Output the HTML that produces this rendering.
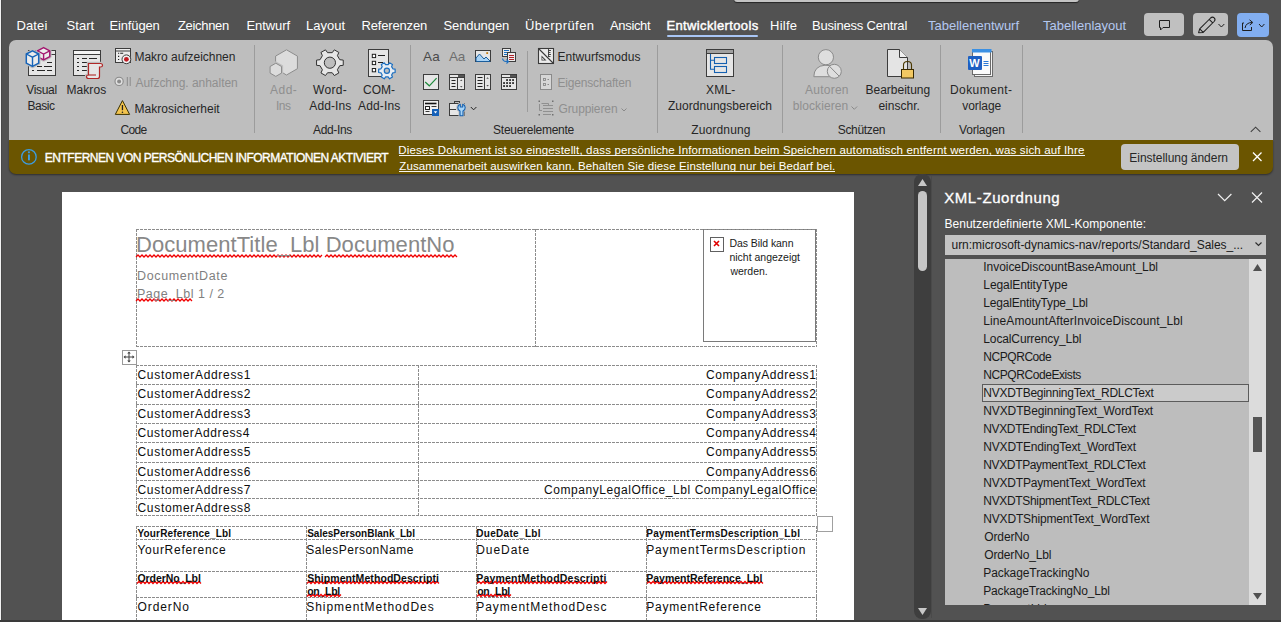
<!DOCTYPE html>
<html><head><meta charset="utf-8"><title>Word</title><style>
html,body{margin:0;padding:0;width:1281px;height:622px;overflow:hidden;background:#525252;}
body{position:relative;font-family:"Liberation Sans",sans-serif;}
.t{position:absolute;white-space:nowrap;line-height:40px;font-family:"Liberation Sans",sans-serif;}
svg{position:absolute;left:0;top:0;}
</style></head><body>
<div style="position:absolute;left:0px;top:0px;width:1px;height:622px;background:#f2f2f2"></div>
<div style="position:absolute;left:1px;top:0px;width:1px;height:622px;background:#484848"></div>
<div style="position:absolute;left:734px;top:-10px;width:345px;height:12px;background:#c3c3c3;border-radius:3px;box-shadow:0 1px 1px rgba(0,0,0,.55)"></div>
<div style="position:absolute;left:9px;top:140px;width:1264px;height:34px;background:#6b5500;border-radius:0 0 7px 7px;box-shadow:0 1px 2px rgba(0,0,0,.45)"></div>
<div style="position:absolute;left:9px;top:40px;width:1264px;height:100px;background:#bebebe;border-radius:7px 7px 0 0"></div>
<div style="position:absolute;left:667px;top:35px;width:91px;height:2px;background:#a9c6f5;border-radius:1px"></div>
<div style="position:absolute;left:1144px;top:13px;width:40px;height:23px;background:#c0c0c0;border-radius:4px"></div>
<div style="position:absolute;left:1193px;top:13px;width:35px;height:23px;background:#c0c0c0;border-radius:4px"></div>
<div style="position:absolute;left:1237px;top:13px;width:32px;height:24px;background:#82aef0;border-radius:4px"></div>
<div style="position:absolute;left:254px;top:45px;width:1px;height:88px;background:#9c9c9c"></div>
<div style="position:absolute;left:410px;top:45px;width:1px;height:88px;background:#9c9c9c"></div>
<div style="position:absolute;left:657px;top:45px;width:1px;height:88px;background:#9c9c9c"></div>
<div style="position:absolute;left:782px;top:45px;width:1px;height:88px;background:#9c9c9c"></div>
<div style="position:absolute;left:940px;top:45px;width:1px;height:88px;background:#9c9c9c"></div>
<div style="position:absolute;left:1022px;top:45px;width:1px;height:88px;background:#9c9c9c"></div>
<div style="position:absolute;left:527px;top:51px;width:1px;height:61px;background:#9c9c9c"></div>
<div style="position:absolute;left:399px;top:155px;width:686px;height:1px;background:#f4f4f4"></div>
<div style="position:absolute;left:399px;top:171px;width:436px;height:1px;background:#f4f4f4"></div>
<div style="position:absolute;left:1121px;top:144px;width:118px;height:26px;background:#c4c4c4;border-radius:4px"></div>
<div style="position:absolute;left:62px;top:192px;width:792px;height:428px;background:#ffffff"></div>
<div style="position:absolute;left:0px;top:620px;width:1281px;height:2px;background:#3a3a3a"></div>
<div style="position:absolute;left:703px;top:229px;width:111px;height:111px;border:1px solid #7a7a7a;background:#fff"></div>
<div style="position:absolute;left:710px;top:237px;width:12px;height:13px;border:1px solid #606060;background:#fff"></div>
<div style="position:absolute;left:122px;top:350px;width:13px;height:13px;border:1px solid #9a9a9a;background:#fff"></div>
<div style="position:absolute;left:817px;top:516px;width:14px;height:14px;border:1px solid #a0a0a0;background:#fff"></div>
<div style="position:absolute;left:914px;top:174px;width:17px;height:445px;background:#3e3e3e;border-radius:8px"></div>
<div style="position:absolute;left:918px;top:191px;width:9px;height:80px;background:#c6c6c6;border-radius:4.5px"></div>
<div style="position:absolute;left:931px;top:176px;width:1px;height:442px;background:#4a4a4a"></div>
<div style="position:absolute;left:945px;top:235px;width:321px;height:20px;background:#c4c4c4"></div>
<div style="position:absolute;left:945px;top:259px;width:321px;height:346px;background:#bdbdbd"></div>
<div style="position:absolute;left:1249px;top:259px;width:17px;height:346px;background:#dcdcdc"></div>
<div style="position:absolute;left:1253px;top:417px;width:9px;height:35px;background:#555555"></div>
<div style="position:absolute;left:982px;top:384px;width:265px;height:16px;border:1px solid #5c5c5c;background:#cbcbcb"></div>
<svg width="1281" height="622" viewBox="0 0 1281 622"><line x1="136" y1="229.5" x2="817" y2="229.5" stroke="#8c8c8c" stroke-width="1" stroke-dasharray="3 1" shape-rendering="crispEdges"/>
<line x1="136" y1="346.5" x2="817" y2="346.5" stroke="#8c8c8c" stroke-width="1" stroke-dasharray="3 1" shape-rendering="crispEdges"/>
<line x1="136.5" y1="229" x2="136.5" y2="347" stroke="#8c8c8c" stroke-width="1" stroke-dasharray="3 1" shape-rendering="crispEdges"/>
<line x1="535.5" y1="229" x2="535.5" y2="347" stroke="#8c8c8c" stroke-width="1" stroke-dasharray="3 1" shape-rendering="crispEdges"/>
<line x1="816.5" y1="229" x2="816.5" y2="347" stroke="#8c8c8c" stroke-width="1" stroke-dasharray="3 1" shape-rendering="crispEdges"/>
<line x1="136" y1="365.5" x2="817" y2="365.5" stroke="#8c8c8c" stroke-width="1" stroke-dasharray="3 1" shape-rendering="crispEdges"/>
<line x1="136" y1="384.5" x2="817" y2="384.5" stroke="#8c8c8c" stroke-width="1" stroke-dasharray="3 1" shape-rendering="crispEdges"/>
<line x1="136" y1="404.5" x2="817" y2="404.5" stroke="#8c8c8c" stroke-width="1" stroke-dasharray="3 1" shape-rendering="crispEdges"/>
<line x1="136" y1="423.5" x2="817" y2="423.5" stroke="#8c8c8c" stroke-width="1" stroke-dasharray="3 1" shape-rendering="crispEdges"/>
<line x1="136" y1="442.5" x2="817" y2="442.5" stroke="#8c8c8c" stroke-width="1" stroke-dasharray="3 1" shape-rendering="crispEdges"/>
<line x1="136" y1="462.5" x2="817" y2="462.5" stroke="#8c8c8c" stroke-width="1" stroke-dasharray="3 1" shape-rendering="crispEdges"/>
<line x1="136" y1="480.5" x2="817" y2="480.5" stroke="#8c8c8c" stroke-width="1" stroke-dasharray="3 1" shape-rendering="crispEdges"/>
<line x1="136" y1="498.5" x2="817" y2="498.5" stroke="#8c8c8c" stroke-width="1" stroke-dasharray="3 1" shape-rendering="crispEdges"/>
<line x1="136" y1="515.5" x2="817" y2="515.5" stroke="#8c8c8c" stroke-width="1" stroke-dasharray="3 1" shape-rendering="crispEdges"/>
<line x1="136.5" y1="365" x2="136.5" y2="516" stroke="#8c8c8c" stroke-width="1" stroke-dasharray="3 1" shape-rendering="crispEdges"/>
<line x1="418.5" y1="365" x2="418.5" y2="516" stroke="#8c8c8c" stroke-width="1" stroke-dasharray="3 1" shape-rendering="crispEdges"/>
<line x1="816.5" y1="365" x2="816.5" y2="516" stroke="#8c8c8c" stroke-width="1" stroke-dasharray="3 1" shape-rendering="crispEdges"/>
<line x1="136" y1="526.5" x2="817" y2="526.5" stroke="#8c8c8c" stroke-width="1" stroke-dasharray="3 1" shape-rendering="crispEdges"/>
<line x1="136" y1="539.5" x2="817" y2="539.5" stroke="#8c8c8c" stroke-width="1" stroke-dasharray="3 1" shape-rendering="crispEdges"/>
<line x1="136" y1="571.5" x2="817" y2="571.5" stroke="#8c8c8c" stroke-width="1" stroke-dasharray="3 1" shape-rendering="crispEdges"/>
<line x1="136" y1="597.5" x2="817" y2="597.5" stroke="#8c8c8c" stroke-width="1" stroke-dasharray="3 1" shape-rendering="crispEdges"/>
<line x1="136.5" y1="526" x2="136.5" y2="620" stroke="#8c8c8c" stroke-width="1" stroke-dasharray="3 1" shape-rendering="crispEdges"/>
<line x1="306.5" y1="526" x2="306.5" y2="620" stroke="#8c8c8c" stroke-width="1" stroke-dasharray="3 1" shape-rendering="crispEdges"/>
<line x1="476.5" y1="526" x2="476.5" y2="620" stroke="#8c8c8c" stroke-width="1" stroke-dasharray="3 1" shape-rendering="crispEdges"/>
<line x1="646.5" y1="526" x2="646.5" y2="620" stroke="#8c8c8c" stroke-width="1" stroke-dasharray="3 1" shape-rendering="crispEdges"/>
<line x1="816.5" y1="526" x2="816.5" y2="620" stroke="#8c8c8c" stroke-width="1" stroke-dasharray="3 1" shape-rendering="crispEdges"/>
<path d="M136,257 L138,255 L140,257 L142,255 L144,257 L146,255 L148,257 L150,255 L152,257 L154,255 L156,257 L158,255 L160,257 L162,255 L164,257 L166,255 L168,257 L170,255 L172,257 L174,255 L176,257 L178,255 L180,257 L182,255 L184,257 L186,255 L188,257 L190,255 L192,257 L194,255 L196,257 L198,255 L200,257 L202,255 L204,257 L206,255 L208,257 L210,255 L212,257 L214,255 L216,257 L218,255 L220,257 L222,255 L224,257 L226,255 L228,257 L230,255 L232,257 L234,255 L236,257 L238,255 L240,257 L242,255 L244,257 L246,255 L248,257 L250,255 L252,257 L254,255 L256,257 L258,255 L260,257 L262,255 L264,257 L266,255 L268,257 L270,255 L272,257 L274,255 L276,257 L278,255 L280,257 L282,255 L284,257 L286,255 L288,257 L290,255 L292,257 L294,255 L296,257 L298,255 L300,257 L302,255 L304,257 L306,255 L308,257 L310,255 L312,257 L314,255 L316,257 L318,255 L320,257 L322,255" stroke="#f00000" stroke-width="1.25" fill="none"/>
<path d="M325,257 L327,255 L329,257 L331,255 L333,257 L335,255 L337,257 L339,255 L341,257 L343,255 L345,257 L347,255 L349,257 L351,255 L353,257 L355,255 L357,257 L359,255 L361,257 L363,255 L365,257 L367,255 L369,257 L371,255 L373,257 L375,255 L377,257 L379,255 L381,257 L383,255 L385,257 L387,255 L389,257 L391,255 L393,257 L395,255 L397,257 L399,255 L401,257 L403,255 L405,257 L407,255 L409,257 L411,255 L413,257 L415,255 L417,257 L419,255 L421,257 L423,255 L425,257 L427,255 L429,257 L431,255 L433,257 L435,255 L437,257 L439,255 L441,257 L443,255 L445,257 L447,255 L449,257 L451,255 L453,257 L455,255 L457,257" stroke="#f00000" stroke-width="1.25" fill="none"/>
<path d="M136,301 L138,299 L140,301 L142,299 L144,301 L146,299 L148,301 L150,299 L152,301 L154,299 L156,301 L158,299 L160,301 L162,299 L164,301 L166,299 L168,301 L170,299 L172,301 L174,299 L176,301 L178,299 L180,301 L182,299 L184,301 L186,299 L188,301 L190,299 L192,301" stroke="#f00000" stroke-width="1.25" fill="none"/>
<path d="M137,583.5 L139,581.5 L141,583.5 L143,581.5 L145,583.5 L147,581.5 L149,583.5 L151,581.5 L153,583.5 L155,581.5 L157,583.5 L159,581.5 L161,583.5 L163,581.5 L165,583.5 L167,581.5 L169,583.5 L171,581.5 L173,583.5 L175,581.5 L177,583.5 L179,581.5 L181,583.5 L183,581.5 L185,583.5 L187,581.5 L189,583.5 L191,581.5 L193,583.5 L195,581.5 L197,583.5 L199,581.5 L201,583.5" stroke="#f00000" stroke-width="1.25" fill="none"/>
<path d="M307,583.5 L309,581.5 L311,583.5 L313,581.5 L315,583.5 L317,581.5 L319,583.5 L321,581.5 L323,583.5 L325,581.5 L327,583.5 L329,581.5 L331,583.5 L333,581.5 L335,583.5 L337,581.5 L339,583.5 L341,581.5 L343,583.5 L345,581.5 L347,583.5 L349,581.5 L351,583.5 L353,581.5 L355,583.5 L357,581.5 L359,583.5 L361,581.5 L363,583.5 L365,581.5 L367,583.5 L369,581.5 L371,583.5 L373,581.5 L375,583.5 L377,581.5 L379,583.5 L381,581.5 L383,583.5 L385,581.5 L387,583.5 L389,581.5 L391,583.5 L393,581.5 L395,583.5 L397,581.5 L399,583.5 L401,581.5 L403,583.5 L405,581.5 L407,583.5 L409,581.5 L411,583.5 L413,581.5 L415,583.5 L417,581.5 L419,583.5 L421,581.5 L423,583.5 L425,581.5 L427,583.5 L429,581.5 L431,583.5 L433,581.5 L435,583.5 L437,581.5 L439,583.5" stroke="#f00000" stroke-width="1.25" fill="none"/>
<path d="M307,596.5 L309,594.5 L311,596.5 L313,594.5 L315,596.5 L317,594.5 L319,596.5 L321,594.5 L323,596.5 L325,594.5 L327,596.5 L329,594.5 L331,596.5 L333,594.5 L335,596.5 L337,594.5 L339,596.5 L341,594.5" stroke="#f00000" stroke-width="1.25" fill="none"/>
<path d="M477,583.5 L479,581.5 L481,583.5 L483,581.5 L485,583.5 L487,581.5 L489,583.5 L491,581.5 L493,583.5 L495,581.5 L497,583.5 L499,581.5 L501,583.5 L503,581.5 L505,583.5 L507,581.5 L509,583.5 L511,581.5 L513,583.5 L515,581.5 L517,583.5 L519,581.5 L521,583.5 L523,581.5 L525,583.5 L527,581.5 L529,583.5 L531,581.5 L533,583.5 L535,581.5 L537,583.5 L539,581.5 L541,583.5 L543,581.5 L545,583.5 L547,581.5 L549,583.5 L551,581.5 L553,583.5 L555,581.5 L557,583.5 L559,581.5 L561,583.5 L563,581.5 L565,583.5 L567,581.5 L569,583.5 L571,581.5 L573,583.5 L575,581.5 L577,583.5 L579,581.5 L581,583.5 L583,581.5 L585,583.5 L587,581.5 L589,583.5 L591,581.5 L593,583.5 L595,581.5 L597,583.5 L599,581.5 L601,583.5 L603,581.5 L605,583.5 L607,581.5" stroke="#f00000" stroke-width="1.25" fill="none"/>
<path d="M477,596.5 L479,594.5 L481,596.5 L483,594.5 L485,596.5 L487,594.5 L489,596.5 L491,594.5 L493,596.5 L495,594.5 L497,596.5 L499,594.5 L501,596.5 L503,594.5 L505,596.5 L507,594.5 L509,596.5 L511,594.5" stroke="#f00000" stroke-width="1.25" fill="none"/>
<path d="M647,583.5 L649,581.5 L651,583.5 L653,581.5 L655,583.5 L657,581.5 L659,583.5 L661,581.5 L663,583.5 L665,581.5 L667,583.5 L669,581.5 L671,583.5 L673,581.5 L675,583.5 L677,581.5 L679,583.5 L681,581.5 L683,583.5 L685,581.5 L687,583.5 L689,581.5 L691,583.5 L693,581.5 L695,583.5 L697,581.5 L699,583.5 L701,581.5 L703,583.5 L705,581.5 L707,583.5 L709,581.5 L711,583.5 L713,581.5 L715,583.5 L717,581.5 L719,583.5 L721,581.5 L723,583.5 L725,581.5 L727,583.5 L729,581.5 L731,583.5 L733,581.5 L735,583.5 L737,581.5 L739,583.5 L741,581.5 L743,583.5 L745,581.5 L747,583.5 L749,581.5 L751,583.5 L753,581.5 L755,583.5 L757,581.5 L759,583.5 L761,581.5 L763,583.5" stroke="#f00000" stroke-width="1.25" fill="none"/>
<path d="M714,241 L719,246 M719,241 L714,246" stroke="#e00000" stroke-width="1.6"/>
<path d="M129,352.5 V361.5 M124.5,357 H133.5" stroke="#404040" stroke-width="1"/>
<path d="M129,351.5 l-1.8,2 h3.6z M129,362.5 l-1.8,-2 h3.6z M123.5,357 l2,-1.8 v3.6z M134.5,357 l-2,-1.8 v3.6z" fill="#404040"/>
<path d="M918,186 L922.5,179 L927,186Z" fill="#c8c8c8"/>
<path d="M918,608 L922.5,615 L927,608Z" fill="#c8c8c8"/>
<path d="M1253,271 L1257.5,264 L1262,271Z" fill="#505050"/>
<path d="M1253,593 L1257.5,599.5 L1262,593Z" fill="#505050"/>
<path d="M1218,194 L1224.7,200.7 L1231.4,194" stroke="#f0f0f0" stroke-width="1.2" fill="none"/>
<path d="M1252,192.5 L1262,202.5 M1262,192.5 L1252,202.5" stroke="#f0f0f0" stroke-width="1.2" fill="none"/>
<path d="M1255.5,242.5 L1258.5,245.5 L1261.5,242.5" stroke="#303030" stroke-width="1.2" fill="none"/>
<path d="M1253,152.5 L1261.5,161 M1261.5,152.5 L1253,161" stroke="#ffffff" stroke-width="1.3" fill="none"/>
<circle cx="28.9" cy="156.9" r="7.3" stroke="#3d9de0" stroke-width="1.3" fill="none"/>
<rect x="28" y="154.5" width="1.9" height="5.8" fill="#3d9de0"/><circle cx="28.95" cy="152.3" r="1.1" fill="#3d9de0"/>
<path d="M1250.8,131.8 L1255.6,127.2 L1260.4,131.8" stroke="#404040" stroke-width="1.1" fill="none"/>
<path d="M1159.5,20.5 H1169.5 V27.5 H1163 L1160.5,30 V27.5 H1159.5Z" stroke="#1e1e1e" stroke-width="1" fill="none"/>
<path d="M1198.6,32.7 L1199.7,28.9 L1210.6,18 Q1212.5,16.2 1214.2,17.9 Q1215.9,19.6 1214.1,21.5 L1203.2,32.4Z M1199.7,28.9 L1203.2,32.4 M1209.2,19.4 L1212.7,22.9" stroke="#1e1e1e" stroke-width="1.05" fill="none" stroke-linejoin="round"/>
<path d="M1218.5,24 L1221.4,27 L1224.3,24" stroke="#1e1e1e" stroke-width="1" fill="none"/>
<path d="M1244,23 H1242.5 V30.5 H1251.5 V27 M1245,28 Q1246,22.5 1252,22.5 M1249.5,19.8 L1252.8,22.5 L1249.8,25" stroke="#1e1e1e" stroke-width="1" fill="none"/>
<path d="M1259,24 L1261.7,27 L1264.4,24" stroke="#1e1e1e" stroke-width="1" fill="none"/>
<rect x="28.5" y="50.5" width="27" height="25" fill="#e6e6e6" stroke="#3c3c3c" stroke-width="1"/>
<line x1="28.5" y1="54.5" x2="55.5" y2="54.5" stroke="#3c3c3c"/>
<path d="M47,62.5 H52 M37,66.5 H42 M44,66.5 H52 M32,70.5 H34 M37,70.5 H45 M47,70.5 H52" stroke="#262626" stroke-width="1.1"/>
<path d="M43.6,47.6 L49.800000000000004,50.800000000000004 L49.800000000000004,56.599999999999994 L43.6,59.8 L37.4,56.599999999999994 L37.4,50.800000000000004Z" fill="#bebebe" stroke="#bebebe" stroke-width="3.6" stroke-linejoin="round"/><path d="M43.6,47.6 L49.800000000000004,50.800000000000004 L49.800000000000004,56.599999999999994 L43.6,59.8 L37.4,56.599999999999994 L37.4,50.800000000000004Z" fill="#ececec" stroke="#a3166f" stroke-width="1.5" stroke-linejoin="round"/><path d="M37.4,50.800000000000004 L43.6,54.0 L49.800000000000004,50.800000000000004 M43.6,54.0 V59.8" stroke="#a3166f" stroke-width="1.4" fill="none"/>
<path d="M32.5,50.8 L38.7,54.0 L38.7,63.19999999999999 L32.5,66.39999999999999 L26.3,63.19999999999999 L26.3,54.0Z" fill="#bebebe" stroke="#bebebe" stroke-width="3.6" stroke-linejoin="round"/><path d="M32.5,50.8 L38.7,54.0 L38.7,63.19999999999999 L32.5,66.39999999999999 L26.3,63.19999999999999 L26.3,54.0Z" fill="#ececec" stroke="#1764b8" stroke-width="1.5" stroke-linejoin="round"/><path d="M26.3,54.0 L32.5,57.199999999999996 L38.7,54.0 M32.5,57.199999999999996 V66.39999999999999" stroke="#1764b8" stroke-width="1.4" fill="none"/>
<rect x="73.5" y="50.5" width="27" height="25" fill="#e6e6e6" stroke="#3c3c3c"/>
<rect x="74" y="51" width="26" height="3.5" fill="#f4f4f4"/><line x1="73.5" y1="54.5" x2="100.5" y2="54.5" stroke="#3c3c3c"/>
<path d="M77,58.5 H79 M82,58.5 H87 M89,58.5 H97 M77,62.5 H79 M82,62.5 H87 M77,66.5 H79 M82,66.5 H87 M77,70.5 H79 M82,70.5 H87" stroke="#262626" stroke-width="1.1"/>
<path d="M88.5,63.5 H100.5 Q102.5,63.5 102.5,65.5 Q102.5,67 100.5,67 H99.5 V76.5 Q99.5,78.5 97.5,78.5 H88.5 Q86.5,78.5 86.5,76.5 Q86.5,75 88.5,75 V63.5Z" fill="#bebebe" stroke="#bebebe" stroke-width="3.4"/>
<path d="M88.5,63.5 H100.5 Q102.5,63.5 102.5,65.5 Q102.5,67 100.5,67 H99.5 V76.5 Q99.5,78.5 97.5,78.5 H88.5 Q86.5,78.5 86.5,76.5 Q86.5,75 88.5,75 V63.5Z" fill="#e6e6e6" stroke="#b02828" stroke-width="1.2"/>
<path d="M88.5,75 H96" stroke="#b02828" stroke-width="1.1"/>
<rect x="115.5" y="48.5" width="15" height="14" fill="#ececec" stroke="#3c3c3c"/><line x1="115.5" y1="51" x2="130.5" y2="51" stroke="#3c3c3c"/>
<path d="M118,53.3 h1.2 M120.2,53.3 h3 M118,56.4 h1.2 M118,59.5 h1.2" stroke="#222" stroke-width="1.1"/>
<circle cx="126.4" cy="59.3" r="4.4" fill="#f2f2f2" stroke="#3c3c3c" stroke-width="1"/><circle cx="126.4" cy="59.3" r="2.4" fill="#c01c24"/>
<circle cx="119.1" cy="81.4" r="4.1" fill="#e0e0e0" stroke="#8a8a8a" stroke-width="1.1"/><circle cx="119.1" cy="81.4" r="2" fill="#8a8a8a"/>
<path d="M127.3,77 V86 M130.2,77 V86" stroke="#8a8a8a" stroke-width="1"/>
<path d="M122.45,100.6 L129.6,114.4 H115.3Z" fill="#f3c44e" stroke="#3a3000" stroke-width="1" stroke-linejoin="round"/>
<path d="M122.45,105 V110.2" stroke="#202020" stroke-width="1.3"/><circle cx="122.45" cy="112.2" r="0.8" fill="#202020"/>
<polygon points="286.50,49.80 297.41,56.10 297.41,68.70 286.50,75.00 275.59,68.70 275.59,56.10" fill="#dcdcdc" stroke="#8c8c8c" stroke-width="1"/>
<polygon points="275.80,63.20 281.52,66.50 281.52,73.10 275.80,76.40 270.08,73.10 270.08,66.50" fill="#dcdcdc" stroke="#bebebe" stroke-width="3.2"/>
<polygon points="275.80,63.20 281.52,66.50 281.52,73.10 275.80,76.40 270.08,73.10 270.08,66.50" fill="#dcdcdc" stroke="#8c8c8c" stroke-width="1"/>
<path d="M339.75,59.70 L343.25,60.10 L343.25,65.30 L339.75,65.70 L337.42,69.73 L338.83,72.96 L334.32,75.56 L332.23,72.73 L327.57,72.73 L325.48,75.56 L320.97,72.96 L322.38,69.73 L320.05,65.70 L316.55,65.30 L316.55,60.10 L320.05,59.70 L322.38,55.67 L320.97,52.44 L325.48,49.84 L327.57,52.67 L332.23,52.67 L334.32,49.84 L338.83,52.44 L337.42,55.67Z" fill="#e6e6e6" stroke="#333" stroke-width="1" stroke-linejoin="round"/>
<circle cx="329.9" cy="62.7" r="5.6" fill="#bebebe" stroke="#333" stroke-width="1"/>
<rect x="368.5" y="49.5" width="20" height="27" fill="#e6e6e6" stroke="#3c3c3c"/>
<rect x="372.3" y="54.3" width="3.3" height="3.3" fill="#fff" stroke="#1e1e1e" stroke-width="1"/>
<rect x="372.3" y="61.3" width="3.3" height="3.3" fill="#fff" stroke="#1e1e1e" stroke-width="1"/>
<rect x="372.3" y="68.5" width="3.3" height="3.3" fill="#fff" stroke="#1e1e1e" stroke-width="1"/>
<path d="M378,55.5 H385 M378,62.5 H383" stroke="#1e1e1e" stroke-width="1"/>
<path d="M392.87,68.80 L395.13,69.10 L395.13,72.50 L392.87,72.80 L391.62,74.97 L392.49,77.07 L389.54,78.77 L388.16,76.97 L385.64,76.97 L384.26,78.77 L381.31,77.07 L382.18,74.97 L380.93,72.80 L378.67,72.50 L378.67,69.10 L380.93,68.80 L382.18,66.63 L381.31,64.53 L384.26,62.83 L385.64,64.63 L388.16,64.63 L389.54,62.83 L392.49,64.53 L391.62,66.63Z" fill="#e8eef4" stroke="#1c6fc0" stroke-width="1.2" stroke-linejoin="round"/>
<circle cx="386.9" cy="70.8" r="2.6" fill="#bebebe" stroke="#1c6fc0" stroke-width="1.2"/>
<text x="423" y="61" font-family="Liberation Sans" font-size="13.5" fill="#4a4a4a" letter-spacing="0.2">Aa</text>
<text x="449" y="61" font-family="Liberation Sans" font-size="13.5" fill="#6e6e6e" letter-spacing="-0.3">Aa</text>
<rect x="475.5" y="50.5" width="15" height="11" fill="#e6e6e6" stroke="#3c3c3c"/>
<path d="M476,58 L479.5,54 L484,59 L486,57 L490,61 V61.5 H476Z" fill="#a9d3f5" stroke="#1a5d9c" stroke-width="1"/>
<rect x="486.3" y="52.2" width="1.8" height="1.8" fill="#c07a10"/>
<rect x="502.5" y="48.5" width="8" height="8" fill="#ececec" stroke="#3c3c3c"/><path d="M504,50.5 h5 M504,52.5 h5 M504,54.5 h3" stroke="#1c6fc0" stroke-width="1"/>
<rect x="507.5" y="52.5" width="8" height="9" fill="#ececec" stroke="#3c3c3c"/><path d="M509,55.5 h5 M509,57.5 h5 M509,59.5 h5" stroke="#b02028" stroke-width="1"/>
<path d="M502.5,58.5 Q503,61.5 506,61.5 H508 M506.5,59.5 L508.5,61.5 L506.5,63.5" stroke="#1c6fc0" stroke-width="1.1" fill="none"/>
<rect x="423.5" y="74.5" width="15" height="15" fill="#e6e6e6" stroke="#3c3c3c"/><path d="M425.2,82 L429.3,85.8 L436.6,78.2" stroke="#1e8a3c" stroke-width="1.2" fill="none"/>
<rect x="449.5" y="74.5" width="15" height="15" fill="#e6e6e6" stroke="#3c3c3c"/><rect x="458" y="75" width="6" height="2.5" fill="#555"/><line x1="449.5" y1="77.5" x2="464.5" y2="77.5" stroke="#3c3c3c"/><line x1="457.5" y1="77.5" x2="457.5" y2="89.5" stroke="#3c3c3c"/>
<path d="M451.5,80.5 h4 M451.5,83.5 h4 M451.5,86.5 h4" stroke="#222" stroke-width="1"/><path d="M460,81 h2.5 l-1.25,-1.5z M460,86 h2.5 l-1.25,1.5z" fill="#555"/>
<rect x="475.5" y="74.5" width="15" height="15" fill="#e6e6e6" stroke="#3c3c3c"/><line x1="484.5" y1="74.5" x2="484.5" y2="89.5" stroke="#3c3c3c"/>
<path d="M477.5,77.5 h5 M477.5,80.5 h5 M477.5,83.5 h5 M477.5,86.5 h5" stroke="#222" stroke-width="1"/><path d="M486.3,78.8 h2.6 l-1.3,-1.5z M486.3,85 h2.6 l-1.3,1.5z" fill="#555"/>
<rect x="501.5" y="74.5" width="15" height="15" fill="#e6e6e6" stroke="#3c3c3c"/><rect x="510" y="75" width="6" height="2.5" fill="#555"/><line x1="501.5" y1="77.5" x2="516.5" y2="77.5" stroke="#3c3c3c"/>
<rect x="506.2" y="79.2" width="1.7" height="1.7" fill="#111"/><rect x="509.2" y="79.2" width="1.7" height="1.7" fill="#111"/><rect x="512.2" y="79.2" width="1.7" height="1.7" fill="#111"/><rect x="503.2" y="82.2" width="1.7" height="1.7" fill="#111"/><rect x="506.2" y="82.2" width="1.7" height="1.7" fill="#111"/><rect x="509.2" y="82.2" width="1.7" height="1.7" fill="#111"/><rect x="512.2" y="82.2" width="1.7" height="1.7" fill="#111"/><rect x="503.2" y="85.2" width="1.7" height="1.7" fill="#111"/><rect x="506.2" y="85.2" width="1.7" height="1.7" fill="#111"/><rect x="509.2" y="85.2" width="1.7" height="1.7" fill="#111"/>
<rect x="423.5" y="100.5" width="15" height="14" fill="#f0f0f0" stroke="#3c3c3c"/><path d="M425,103.5 h11.5" stroke="#111" stroke-width="1.6"/><rect x="425.5" y="106.5" width="4" height="3" fill="#fff" stroke="#222"/><path d="M431.5,106.5 h5 M425.5,111.5 h4" stroke="#222" stroke-width="0.9"/>
<rect x="432" y="109" width="7" height="7" fill="#1460b8"/><path d="M433.8,111.3 h3.4 l-1.7,2.2z" fill="#fff"/>
<rect x="449.5" y="103.5" width="15" height="12" fill="#e6e6e6" stroke="#3c3c3c"/><rect x="454.5" y="101.5" width="5" height="2" fill="none" stroke="#3c3c3c"/><line x1="449.5" y1="109.5" x2="456" y2="109.5" stroke="#3c3c3c"/>
<path d="M460.3,104.3 V107 H462.7 V104.3 A3.5,3.5 0 0 1 463,110.9 V115.8 H460 V110.9 A3.5,3.5 0 0 1 460.3,104.3Z" fill="#bebebe" stroke="#bebebe" stroke-width="3"/>
<path d="M460.3,104.3 V107 H462.7 V104.3 A3.5,3.5 0 0 1 463,110.9 V115.8 H460 V110.9 A3.5,3.5 0 0 1 460.3,104.3Z" fill="#a9d5f7" stroke="#1460b0" stroke-width="1.1" stroke-linejoin="round"/>
<path d="M470.8,107 L473.6,109.8 L476.4,107" stroke="#222" stroke-width="1" fill="none"/>
<rect x="538.5" y="48.5" width="15" height="15" fill="#ececec" stroke="#3a3a3a" stroke-width="1.1"/>
<path d="M539,49 L553,63" stroke="#3a3a3a" stroke-width="1.1"/><path d="M541.5,55.5 V60.5 H546.5Z" fill="#444"/><path d="M542.6,58 V59.4 H544" stroke="#ececec" stroke-width="0.8" fill="none"/>
<path d="M548.5,49 V57 M548.5,50.5 h2.5 M548.5,52.5 h2 M548.5,54.5 h2.5 M548.5,56.5 h2" stroke="#3a3a3a" stroke-width="0.9"/>
<rect x="540.5" y="74.5" width="11" height="15" fill="#d6d6d6" stroke="#8a8a8a"/><rect x="543.5" y="78.5" width="2" height="2" fill="none" stroke="#8a8a8a" stroke-width="0.9"/><rect x="543.5" y="83.5" width="2" height="2" fill="none" stroke="#8a8a8a" stroke-width="0.9"/><path d="M547.5,79.5 h1.5 M547.5,84.5 h1.5" stroke="#8a8a8a"/>
<path d="M538.5,100.5 h1.5 v1.5 h-1.5z M552,100.5 h1.5 v1.5 h-1.5z M538.5,114 h1.5 v1.5 h-1.5z M552,114 h1.5 v1.5 h-1.5z" fill="#707070"/>
<path d="M541.5,103.5 H548.5 V105 M539.5,104 V110.5 H542 M543,105.5 H553 M543,108.5 H553 M543,111.5 H553 M543,114.5 H551" stroke="#8a8a8a" stroke-width="0.9" fill="none"/>
<path d="M621.5,108.5 L624,111 L626.5,108.5" stroke="#8a8a8a" stroke-width="1" fill="none"/>
<path d="M851.5,106.5 L854.3,109.3 L857.1,106.5" stroke="#8a8a8a" stroke-width="1" fill="none"/>
<rect x="706.5" y="49.5" width="27" height="27" fill="#e6e6e6" stroke="#3c3c3c"/><rect x="707" y="50" width="26" height="3.5" fill="#a0a0a0"/><line x1="706.5" y1="53.5" x2="733.5" y2="53.5" stroke="#3c3c3c"/>
<path d="M710.5,54 V69.3 H714 M710.5,60.3 H714" stroke="#1460b0" stroke-width="1.1" fill="none"/><rect x="714.5" y="57.5" width="12" height="6" fill="#e6e6e6" stroke="#1460b0" stroke-width="1.1"/><rect x="714.5" y="66.5" width="12" height="6" fill="#e6e6e6" stroke="#1460b0" stroke-width="1.1"/>
<path d="M813.8,76.7 Q814,66 825,65.2 Q830,65 833,67 L833,76.7Z" fill="#dedede" stroke="#8a8a8a" stroke-width="1"/>
<circle cx="825.9" cy="57.2" r="7.6" fill="#dedede" stroke="#8a8a8a" stroke-width="1"/>
<circle cx="834.3" cy="71.3" r="7" fill="#dedede" stroke="#8a8a8a" stroke-width="1"/><path d="M829.5,66.3 L839.2,76.2" stroke="#8a8a8a" stroke-width="1"/>
<path d="M887.5,49.5 H899.5 L907.5,57.5 V76.5 H887.5Z" fill="#e4e4e4" stroke="#3c3c3c"/><path d="M899.5,49.5 V57.5 H907.5" fill="#f0f0f0" stroke="#3c3c3c"/>
<path d="M903.5,69 V65 Q903.5,61.5 907.5,61.5 Q911.5,61.5 911.5,65 V69" fill="none" stroke="#4a3800" stroke-width="1.1"/><rect x="901.5" y="69.5" width="12" height="8.5" fill="#f2c862" stroke="#3a2a00" stroke-width="1"/>
<rect x="974.5" y="51.5" width="18" height="25" fill="#f4f4f4" stroke="#6a6a6a"/>
<rect x="972.5" y="49.5" width="18" height="25" fill="#fafafa" stroke="#6a6a6a"/><rect x="972" y="49" width="19.5" height="3.5" fill="#3b90e3"/>
<rect x="968" y="56" width="14" height="14" rx="1" fill="#1d5fc2"/><text x="969.2" y="67.3" font-family="Liberation Sans" font-weight="700" font-size="11" fill="#fff">W</text>
<path d="M983.5,61.5 h5 M983.5,63.5 h5 M983.5,65.5 h5" stroke="#2a78d6" stroke-width="1"/></svg>
<div class="t" style="left:16.50px;top:6px;font-size:13px;color:#ffffff;letter-spacing:0.125px;">Datei</div>
<div class="t" style="left:66.50px;top:6px;font-size:13px;color:#ffffff;letter-spacing:0.062px;">Start</div>
<div class="t" style="left:109.50px;top:6px;font-size:13px;color:#ffffff;letter-spacing:-0.143px;">Einfügen</div>
<div class="t" style="left:178.00px;top:6px;font-size:13px;color:#ffffff;letter-spacing:-0.321px;">Zeichnen</div>
<div class="t" style="left:246.50px;top:6px;font-size:13px;color:#ffffff;letter-spacing:-0.083px;">Entwurf</div>
<div class="t" style="left:306.00px;top:6px;font-size:13px;color:#ffffff;letter-spacing:0.0px;">Layout</div>
<div class="t" style="left:361.50px;top:6px;font-size:13px;color:#ffffff;letter-spacing:-0.167px;">Referenzen</div>
<div class="t" style="left:443.50px;top:6px;font-size:13px;color:#ffffff;letter-spacing:-0.094px;">Sendungen</div>
<div class="t" style="left:525.00px;top:6px;font-size:13px;color:#ffffff;letter-spacing:0.444px;">Überprüfen</div>
<div class="t" style="left:610.00px;top:6px;font-size:13px;color:#ffffff;letter-spacing:-0.333px;">Ansicht</div>
<div class="t" style="left:770.00px;top:6px;font-size:13px;color:#ffffff;letter-spacing:0.25px;">Hilfe</div>
<div class="t" style="left:812.00px;top:6px;font-size:13px;color:#ffffff;letter-spacing:-0.2px;">Business Central</div>
<div class="t" style="left:666.50px;top:6px;font-size:13px;color:#ffffff;letter-spacing:0.357px;-webkit-text-stroke:0.45px #fff;">Entwicklertools</div>
<div class="t" style="left:928.00px;top:6px;font-size:13px;color:#b4c8f0;letter-spacing:0.0px;">Tabellenentwurf</div>
<div class="t" style="left:1043.00px;top:6px;font-size:13px;color:#b4c8f0;letter-spacing:0.0px;">Tabellenlayout</div>
<div class="t" style="left:26.20px;top:70px;font-size:12px;color:#262626;letter-spacing:-0.32px;">Visual</div>
<div class="t" style="left:27.60px;top:86px;font-size:12px;color:#262626;letter-spacing:-0.475px;">Basic</div>
<div class="t" style="left:66.50px;top:70px;font-size:12px;color:#262626;letter-spacing:0.06px;">Makros</div>
<div class="t" style="left:134.50px;top:37px;font-size:12px;color:#262626;letter-spacing:-0.031px;">Makro aufzeichnen</div>
<div class="t" style="left:135.50px;top:63px;font-size:12px;color:#8f8f8f;letter-spacing:-0.029px;">Aufzchng. anhalten</div>
<div class="t" style="left:134.50px;top:89px;font-size:12px;color:#262626;letter-spacing:0.036px;">Makrosicherheit</div>
<div class="t" style="left:120.60px;top:110px;font-size:12px;color:#262626;letter-spacing:-0.7px;">Code</div>
<div class="t" style="left:270.00px;top:70px;font-size:12px;color:#8f8f8f;letter-spacing:0.5px;">Add-</div>
<div class="t" style="left:276.00px;top:86px;font-size:12px;color:#8f8f8f;letter-spacing:-0.5px;">Ins</div>
<div class="t" style="left:313.00px;top:70px;font-size:12px;color:#262626;letter-spacing:0.325px;">Word-</div>
<div class="t" style="left:309.30px;top:86px;font-size:12px;color:#262626;letter-spacing:0.117px;">Add-Ins</div>
<div class="t" style="left:363.00px;top:70px;font-size:12px;color:#262626;letter-spacing:0.0px;">COM-</div>
<div class="t" style="left:358.00px;top:86px;font-size:12px;color:#262626;letter-spacing:0.167px;">Add-Ins</div>
<div class="t" style="left:313.00px;top:110px;font-size:12px;color:#262626;letter-spacing:-0.333px;">Add-Ins</div>
<div class="t" style="left:557.40px;top:37px;font-size:12px;color:#262626;letter-spacing:0.033px;">Entwurfsmodus</div>
<div class="t" style="left:557.40px;top:63px;font-size:12px;color:#8f8f8f;letter-spacing:-0.167px;">Eigenschaften</div>
<div class="t" style="left:558.40px;top:89px;font-size:12px;color:#8f8f8f;letter-spacing:-0.089px;">Gruppieren</div>
<div class="t" style="left:493.10px;top:110px;font-size:12px;color:#262626;letter-spacing:-0.277px;">Steuerelemente</div>
<div class="t" style="left:706.00px;top:70px;font-size:12px;color:#262626;letter-spacing:0.2px;">XML-</div>
<div class="t" style="left:667.90px;top:86px;font-size:12px;color:#262626;letter-spacing:0.044px;">Zuordnungsbereich</div>
<div class="t" style="left:691.20px;top:110px;font-size:12px;color:#262626;letter-spacing:0.162px;">Zuordnung</div>
<div class="t" style="left:805.00px;top:70px;font-size:12px;color:#8f8f8f;letter-spacing:0.25px;">Autoren</div>
<div class="t" style="left:792.70px;top:86px;font-size:12px;color:#8f8f8f;letter-spacing:0.089px;">blockieren</div>
<div class="t" style="left:837.70px;top:110px;font-size:12px;color:#262626;letter-spacing:-0.314px;">Schützen</div>
<div class="t" style="left:865.50px;top:70px;font-size:12px;color:#262626;letter-spacing:0.0px;">Bearbeitung</div>
<div class="t" style="left:878.40px;top:86px;font-size:12px;color:#262626;letter-spacing:0.029px;">einschr.</div>
<div class="t" style="left:950.00px;top:70px;font-size:12px;color:#262626;letter-spacing:0.425px;">Dokument-</div>
<div class="t" style="left:962.30px;top:86px;font-size:12px;color:#262626;letter-spacing:-0.067px;">vorlage</div>
<div class="t" style="left:959.10px;top:110px;font-size:12px;color:#262626;letter-spacing:-0.229px;">Vorlagen</div>
<div class="t" style="left:44.80px;top:138px;font-size:12px;color:#ffffff;letter-spacing:-0.498px;-webkit-text-stroke:0.35px #fff;">ENTFERNEN VON PERSÖNLICHEN INFORMATIONEN AKTIVIERT</div>
<div class="t" style="left:398.30px;top:130px;font-size:11.5px;color:#ffffff;letter-spacing:0.157px;">Dieses Dokument ist so eingestellt, dass persönliche Informationen beim Speichern automatisch entfernt werden, was sich auf Ihre</div>
<div class="t" style="left:399.30px;top:146px;font-size:11.5px;color:#ffffff;letter-spacing:0.096px;">Zusammenarbeit auswirken kann. Behalten Sie diese Einstellung nur bei Bedarf bei.</div>
<div class="t" style="left:1129.30px;top:138px;font-size:12px;color:#262626;letter-spacing:-0.041px;">Einstellung ändern</div>
<div class="t" style="left:136.00px;top:225px;font-size:22px;color:#888888;letter-spacing:0.052px;">DocumentTitle_Lbl DocumentNo</div>
<div class="t" style="left:137.00px;top:256px;font-size:12.5px;color:#7f7f7f;letter-spacing:0.636px;">DocumentDate</div>
<div class="t" style="left:137.00px;top:274px;font-size:12.5px;color:#7f7f7f;letter-spacing:0.515px;">Page_Lbl 1 / 2</div>
<div class="t" style="left:729.40px;top:223px;font-size:10.5px;color:#1a1a1a;letter-spacing:-0.058px;">Das Bild kann</div>
<div class="t" style="left:729.40px;top:237px;font-size:10.5px;color:#1a1a1a;letter-spacing:0px;">nicht angezeigt</div>
<div class="t" style="left:730.40px;top:251px;font-size:10.5px;color:#1a1a1a;letter-spacing:0px;">werden.</div>
<div class="t" style="left:137.50px;top:355px;font-size:12px;color:#0d0d0d;letter-spacing:0.68px;">CustomerAddress1</div>
<div class="t" style="left:137.50px;top:374px;font-size:12px;color:#0d0d0d;letter-spacing:0.68px;">CustomerAddress2</div>
<div class="t" style="left:137.50px;top:394px;font-size:12px;color:#0d0d0d;letter-spacing:0.68px;">CustomerAddress3</div>
<div class="t" style="left:137.50px;top:413px;font-size:12px;color:#0d0d0d;letter-spacing:0.613px;">CustomerAddress4</div>
<div class="t" style="left:137.50px;top:432px;font-size:12px;color:#0d0d0d;letter-spacing:0.68px;">CustomerAddress5</div>
<div class="t" style="left:137.50px;top:452px;font-size:12px;color:#0d0d0d;letter-spacing:0.68px;">CustomerAddress6</div>
<div class="t" style="left:137.50px;top:470px;font-size:12px;color:#0d0d0d;letter-spacing:0.68px;">CustomerAddress7</div>
<div class="t" style="left:137.50px;top:488px;font-size:12px;color:#0d0d0d;letter-spacing:0.68px;">CustomerAddress8</div>
<div class="t" style="left:706.00px;top:355px;font-size:12px;color:#0d0d0d;letter-spacing:0.557px;">CompanyAddress1</div>
<div class="t" style="left:706.00px;top:374px;font-size:12px;color:#0d0d0d;letter-spacing:0.557px;">CompanyAddress2</div>
<div class="t" style="left:706.00px;top:394px;font-size:12px;color:#0d0d0d;letter-spacing:0.557px;">CompanyAddress3</div>
<div class="t" style="left:706.00px;top:413px;font-size:12px;color:#0d0d0d;letter-spacing:0.557px;">CompanyAddress4</div>
<div class="t" style="left:706.00px;top:432px;font-size:12px;color:#0d0d0d;letter-spacing:0.557px;">CompanyAddress5</div>
<div class="t" style="left:706.00px;top:452px;font-size:12px;color:#0d0d0d;letter-spacing:0.557px;">CompanyAddress6</div>
<div class="t" style="left:544.00px;top:470px;font-size:12px;color:#0d0d0d;letter-spacing:0.555px;">CompanyLegalOffice_Lbl CompanyLegalOffice</div>
<div class="t" style="left:137.50px;top:514px;font-size:10px;font-weight:700;color:#0d0d0d;letter-spacing:0.156px;">YourReference_Lbl</div>
<div class="t" style="left:307.20px;top:514px;font-size:10px;font-weight:700;color:#0d0d0d;letter-spacing:0.0px;">SalesPersonBlank_Lbl</div>
<div class="t" style="left:476.20px;top:514px;font-size:10px;font-weight:700;color:#0d0d0d;letter-spacing:0.32px;">DueDate_Lbl</div>
<div class="t" style="left:646.20px;top:514px;font-size:10px;font-weight:700;color:#0d0d0d;letter-spacing:0.277px;">PaymentTermsDescription_Lbl</div>
<div class="t" style="left:137.50px;top:530px;font-size:12px;color:#0d0d0d;letter-spacing:0.717px;">YourReference</div>
<div class="t" style="left:306.20px;top:530px;font-size:12px;color:#0d0d0d;letter-spacing:0.507px;">SalesPersonName</div>
<div class="t" style="left:476.20px;top:530px;font-size:12px;color:#0d0d0d;letter-spacing:0.95px;">DueDate</div>
<div class="t" style="left:646.20px;top:530px;font-size:12px;color:#0d0d0d;letter-spacing:0.877px;">PaymentTermsDescription</div>
<div class="t" style="left:137.50px;top:558px;font-size:10.5px;font-weight:700;color:#0d0d0d;letter-spacing:-0.08px;">OrderNo_Lbl</div>
<div class="t" style="left:307.20px;top:558px;font-size:10.5px;font-weight:700;color:#0d0d0d;letter-spacing:0.073px;">ShipmentMethodDescripti</div>
<div class="t" style="left:307.20px;top:571px;font-size:10.5px;font-weight:700;color:#0d0d0d;letter-spacing:-0.28px;">on_Lbl</div>
<div class="t" style="left:476.20px;top:558px;font-size:10.5px;font-weight:700;color:#0d0d0d;letter-spacing:0.195px;">PaymentMethodDescripti</div>
<div class="t" style="left:477.20px;top:571px;font-size:10.5px;font-weight:700;color:#0d0d0d;letter-spacing:-0.28px;">on_Lbl</div>
<div class="t" style="left:646.20px;top:558px;font-size:10.5px;font-weight:700;color:#0d0d0d;letter-spacing:0.005px;">PaymentReference_Lbl</div>
<div class="t" style="left:137.50px;top:587px;font-size:12px;color:#0d0d0d;letter-spacing:0.917px;">OrderNo</div>
<div class="t" style="left:306.20px;top:587px;font-size:12px;color:#0d0d0d;letter-spacing:0.963px;">ShipmentMethodDes</div>
<div class="t" style="left:476.20px;top:587px;font-size:12px;color:#0d0d0d;letter-spacing:0.969px;">PaymentMethodDesc</div>
<div class="t" style="left:646.20px;top:587px;font-size:12px;color:#0d0d0d;letter-spacing:0.8px;">PaymentReference</div>
<div class="t" style="left:944.20px;top:178px;font-size:15px;color:#ffffff;letter-spacing:0.592px;-webkit-text-stroke:0.3px #fff;">XML-Zuordnung</div>
<div class="t" style="left:944.50px;top:204px;font-size:12px;color:#ffffff;letter-spacing:0.024px;">Benutzerdefinierte XML-Komponente:</div>
<div class="t" style="left:951.50px;top:225px;font-size:12px;color:#1a1a1a;letter-spacing:-0.035px;">urn:microsoft-dynamics-nav/reports/Standard_Sales_...</div>
<div class="t" style="left:983.30px;top:247px;font-size:12px;color:#1a1a1a;letter-spacing:-0.05px;">InvoiceDiscountBaseAmount_Lbl</div>
<div class="t" style="left:983.30px;top:265px;font-size:12px;color:#1a1a1a;letter-spacing:-0.079px;">LegalEntityType</div>
<div class="t" style="left:983.30px;top:283px;font-size:12px;color:#1a1a1a;letter-spacing:-0.189px;">LegalEntityType_Lbl</div>
<div class="t" style="left:983.30px;top:301px;font-size:12px;color:#1a1a1a;letter-spacing:0.079px;">LineAmountAfterInvoiceDiscount_Lbl</div>
<div class="t" style="left:983.30px;top:319px;font-size:12px;color:#1a1a1a;letter-spacing:-0.125px;">LocalCurrency_Lbl</div>
<div class="t" style="left:983.30px;top:337px;font-size:12px;color:#1a1a1a;letter-spacing:-0.45px;">NCPQRCode</div>
<div class="t" style="left:983.30px;top:355px;font-size:12px;color:#1a1a1a;letter-spacing:-0.429px;">NCPQRCodeExists</div>
<div class="t" style="left:983.30px;top:373px;font-size:12px;color:#1a1a1a;letter-spacing:-0.265px;">NVXDTBeginningText_RDLCText</div>
<div class="t" style="left:983.30px;top:391px;font-size:12px;color:#1a1a1a;letter-spacing:-0.127px;">NVXDTBeginningText_WordText</div>
<div class="t" style="left:983.30px;top:409px;font-size:12px;color:#1a1a1a;letter-spacing:-0.37px;">NVXDTEndingText_RDLCText</div>
<div class="t" style="left:983.30px;top:427px;font-size:12px;color:#1a1a1a;letter-spacing:-0.196px;">NVXDTEndingText_WordText</div>
<div class="t" style="left:983.30px;top:445px;font-size:12px;color:#1a1a1a;letter-spacing:-0.367px;">NVXDTPaymentText_RDLCText</div>
<div class="t" style="left:983.30px;top:463px;font-size:12px;color:#1a1a1a;letter-spacing:-0.2px;">NVXDTPaymentText_WordText</div>
<div class="t" style="left:983.30px;top:481px;font-size:12px;color:#1a1a1a;letter-spacing:-0.332px;">NVXDTShipmentText_RDLCText</div>
<div class="t" style="left:983.30px;top:499px;font-size:12px;color:#1a1a1a;letter-spacing:-0.172px;">NVXDTShipmentText_WordText</div>
<div class="t" style="left:984.30px;top:517px;font-size:12px;color:#1a1a1a;letter-spacing:-0.133px;">OrderNo</div>
<div class="t" style="left:984.30px;top:535px;font-size:12px;color:#1a1a1a;letter-spacing:-0.16px;">OrderNo_Lbl</div>
<div class="t" style="left:983.30px;top:553px;font-size:12px;color:#1a1a1a;letter-spacing:-0.094px;">PackageTrackingNo</div>
<div class="t" style="left:983.30px;top:571px;font-size:12px;color:#1a1a1a;letter-spacing:-0.18px;">PackageTrackingNo_Lbl</div>
<div class="t" style="left:983.30px;top:589px;font-size:12px;color:#1a1a1a;letter-spacing:0px;">PaymentLbl</div>
<div style="position:absolute;left:945px;top:605px;width:321px;height:15px;background:#525252"></div>
</body></html>
